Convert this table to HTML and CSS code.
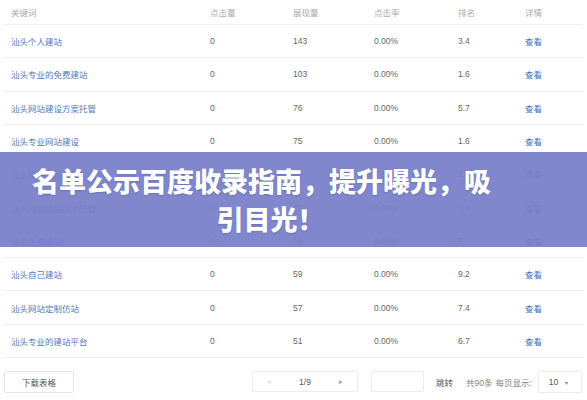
FILE: index.html
```html
<!DOCTYPE html>
<html lang="zh-CN">
<head>
  <meta charset="UTF-8">
  <title>关键词排名</title>
  <link rel="stylesheet" href="styles.css">
</head>
<body>
  <div class="page">
    <!-- 关键词表格 -->
    <div class="table">
      <div class="row head">
        <span>关键词</span><span>点击量</span><span>展现量</span><span>点击率</span><span>排名</span><span>详情</span>
      </div>
      <div class="row"><a class="kw">汕头个人建站</a><span>0</span><span>143</span><span>0.00%</span><span>3.4</span><a class="more">查看</a></div>
      <div class="row"><a class="kw">汕头专业的免费建站</a><span>0</span><span>103</span><span>0.00%</span><span>1.6</span><a class="more">查看</a></div>
      <div class="row"><a class="kw">汕头网站建设方案托管</a><span>0</span><span>76</span><span>0.00%</span><span>5.7</span><a class="more">查看</a></div>
      <div class="row"><a class="kw">汕头专业网站建设</a><span>0</span><span>75</span><span>0.00%</span><span>1.6</span><a class="more">查看</a></div>
      <div class="row"><a class="kw">汕头网站建设公司</a><span>0</span><span>72</span><span>0.00%</span><span>1.3</span><a class="more">查看</a></div>
      <div class="row"><a class="kw">汕头网站建设技术托管</a><span>0</span><span>70</span><span>0.00%</span><span>8.4</span><a class="more">查看</a></div>
      <div class="row"><a class="kw">汕头免费建站</a><span>0</span><span>69</span><span>0.00%</span><span>7</span><a class="more">查看</a></div>
      <div class="row"><a class="kw">汕头自己建站</a><span>0</span><span>59</span><span>0.00%</span><span>9.2</span><a class="more">查看</a></div>
      <div class="row"><a class="kw">汕头网站定制仿站</a><span>0</span><span>57</span><span>0.00%</span><span>7.4</span><a class="more">查看</a></div>
      <div class="row"><a class="kw">汕头专业的建站平台</a><span>0</span><span>51</span><span>0.00%</span><span>6.7</span><a class="more">查看</a></div>
    </div>

    <!-- 底部分页 -->
    <div class="footer">
      <button class="download">下载表格</button>
      <div class="pager">
        <span class="arrow">&#9666;</span>
        <span class="pnum">1/9</span>
        <span class="arrow dark">&#9656;</span>
      </div>
      <div class="jump-input"></div>
      <span class="jump">跳转</span>
      <span class="total">共90条</span>
      <span class="per">每页显示:</span>
      <div class="size">10 <span class="caret">&#9662;</span></div>
    </div>

    <!-- 标题横幅 -->
    <div class="banner">
      <h1><span class="line">名单公示百度收录指南，提升曝光，吸</span><span class="line last">引目光！</span></h1>
    </div>
  </div>
</body>
</html>
```

FILE: styles.css
```css
* { box-sizing: border-box; }
body {
  margin: 0;
  background: #fff;
  font-family: "Liberation Sans", "Noto Sans CJK SC", sans-serif;
  font-size: 8.5px;
  color: #666;
}
.page {
  position: relative;
  width: 587px;
  height: 400px;
  overflow: hidden;
}
.table {
  margin: 0 4px 0 3px;
}
.row {
  display: grid;
  grid-template-columns: 199px 83px 81px 84px 67px 1fr;
  align-items: center;
  height: 33.3px;
  padding-left: 8px;
  border-bottom: 1px solid #efefef;
}
.row.head {
  height: 25px;
  color: #aaa;
}
.kw {
  color: #5079b8;
}
.more {
  color: #3d6fc0;
}
.footer {
  display: flex;
  align-items: center;
  padding: 13px 0 0 4px;
  white-space: nowrap;
}
.footer > * {
  flex-shrink: 0;
}
.download {
  width: 70px;
  height: 22px;
  padding: 0;
  border: 1px solid #e6e6e6;
  border-radius: 2px;
  background: #fff;
  font-family: inherit;
  font-size: 8.5px;
  color: #555;
}
.pager {
  display: flex;
  align-items: center;
  justify-content: space-between;
  width: 106px;
  height: 21px;
  margin-left: 178px;
  padding: 0 14px;
  border: 1px solid #ececec;
  border-radius: 2px;
}
.arrow {
  font-size: 7px;
  color: #ddd;
}
.arrow.dark {
  color: #999;
}
.pnum {
  color: #555;
}
.jump-input {
  width: 53px;
  height: 21px;
  margin-left: 13px;
  border: 1px solid #ececec;
  border-radius: 2px;
}
.jump {
  margin-left: 12px;
  color: #555;
}
.total {
  margin-left: 13px;
  color: #888;
}
.per {
  margin-left: 3px;
  color: #888;
}
.size {
  width: 44px;
  height: 22px;
  margin-left: 6px;
  padding-left: 10px;
  line-height: 20px;
  border: 1px solid #ececec;
  border-radius: 2px;
  color: #555;
}
.caret {
  margin-left: 4px;
  font-size: 6px;
  color: #888;
}
.banner {
  position: absolute;
  top: 152px;
  left: 0;
  right: 0;
  height: 95px;
  padding: 10px 64px 0 0;
  background: rgba(118, 126, 200, 0.93);
}
.banner h1 {
  margin: 0;
  font-family: "Noto Sans CJK SC", sans-serif;
  font-weight: 900;
  font-size: 27px;
  line-height: 38px;
  text-align: center;
  color: #fff;
  text-shadow: 0 1px 2px rgba(0, 0, 0, 0.15);
}
.banner .line {
  display: block;
}
.banner .line.last {
  padding-left: 18px;
}
```
